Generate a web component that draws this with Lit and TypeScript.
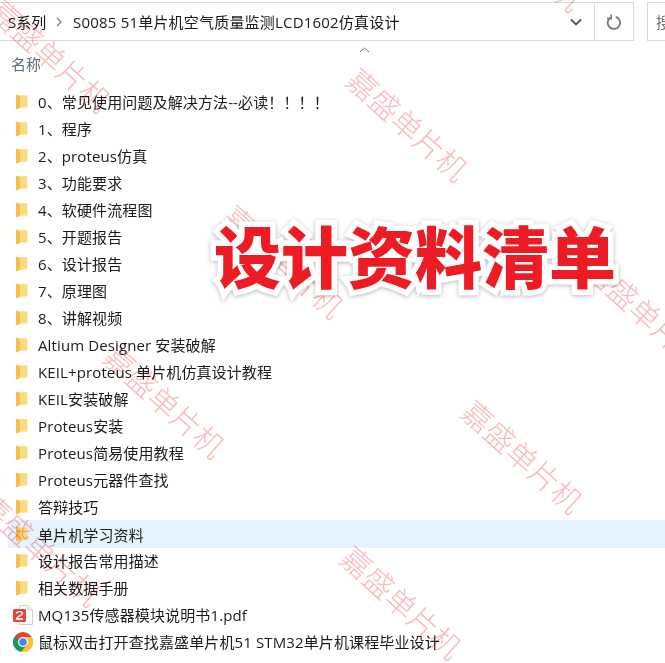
import { LitElement, html, css } from "lit";
import { customElement } from "lit/decorators.js";

const rows = [
  "0、常见使用问题及解决方法--必读！！！！",
  "1、程序",
  "2、proteus仿真",
  "3、功能要求",
  "4、软硬件流程图",
  "5、开题报告",
  "6、设计报告",
  "7、原理图",
  "8、讲解视频",
  "Altium Designer 安装破解",
  "KEIL+proteus 单片机仿真设计教程",
  "KEIL安装破解",
  "Proteus安装",
  "Proteus简易使用教程",
  "Proteus元器件查找",
  "答辩技巧",
  "单片机学习资料",
  "设计报告常用描述",
  "相关数据手册",
];

const marks: [number, number][] = [
  [50, 56], [522, -45], [407, 125], [283, 262], [645, 314],
  [522, 457], [164, 402], [401, 603], [40, 550],
];

@customElement("app-root")
export class AppRoot extends LitElement {
  static styles = css`
    :host { display: block; width: 665px; height: 663px; position: relative; overflow: hidden; background: #fff;
      font-family: "Open Sans", "Noto Sans CJK SC", sans-serif; color: #1a1a1a; }
    .bar { display: flex; padding-top: 2px; height: 39px; box-sizing: content-box; }
    .addr { width: 594px; height: 37px; flex: none; display: flex; align-items: center; border: solid #d9d9d9; border-width: 1px 0; font-size: 15px; box-sizing: content-box; }
    .crumb1 { margin-left: 8px; width: 47px; }
    .sep { width: 18px; flex: none; display: flex; }
    .path { flex: 1; white-space: nowrap; letter-spacing: .2px; }
    .drop { width: 36px; display: flex; justify-content: center; }
    .refresh { width: 38px; flex: none; height: 37px; border: 1px solid #d9d9d9; display: flex; align-items: center; justify-content: center; box-sizing: content-box; }
    .search { margin-left: 13px; flex: 1; height: 37px; border: 1px solid #d9d9d9; border-right: 0; display: flex; align-items: center; padding-left: 8px; font-size: 15px; color: #6d6d6d; overflow: hidden; white-space: nowrap; box-sizing: content-box; }
    .head { height: 40px; position: relative; font-size: 15px; color: #5b6b7c; padding: 13px 0 0 11px; box-sizing: border-box; line-height: 20px; }
    .caret { position: absolute; left: 359px; top: 6px; }
    .list { padding: 7px 0 0 8px; }
    .row { height: 27px; display: flex; align-items: center; font-size: 15px; white-space: nowrap; letter-spacing: .12px; }
    .row.sel { background: #e5f3ff; height: 28px; margin-bottom: -1px; }
    .ico { width: 30px; flex: none; display: flex; }
    .ico svg { margin-left: 8px; }
    .ico svg.file { margin-left: 5px; }
    .wm { position: absolute; width: 200px; height: 40px; margin: -20px 0 0 -100px; line-height: 40px; text-align: center; font-size: 30px; font-weight: 300; color: #f8bcbc; mix-blend-mode: multiply; transform: rotate(42deg); white-space: nowrap; pointer-events: none; }
    .title { position: absolute; left: 0; top: 209px; width: 830px; text-align: center; font-family: "Noto Sans CJK SC", sans-serif; font-size: 67px; line-height: 90px; font-weight: 900; color: #ed1c24; -webkit-text-stroke: 11px #fff; paint-order: stroke fill; white-space: nowrap; filter: drop-shadow(0 1px 2px rgba(0,0,0,.28)); }
  `;

  folder() {
    return html`<span class="ico"><svg width="12" height="16" viewBox="0 0 12 16">
      <path d="M0 1 H11 V13.5 H0 Z" fill="#fde39a"/>
      <path d="M3.5 2 H11.5 V13.5 H3.5 Z" fill="#fcdb80"/>
      <path d="M0 0.5 L4 2 V14 L0 15.5 Z" fill="#f2c04c"/>
    </svg></span>`;
  }

  render() {
    return html`
      <div class="bar">
        <div class="addr">
          <span class="crumb1">S系列</span>
          <span class="sep"><svg width="8" height="10" viewBox="0 0 8 10"><path d="M2 1 L6 5 L2 9" fill="none" stroke="#808080" stroke-width="1.3"/></svg></span>
          <span class="path">S0085 51单片机空气质量监测LCD1602仿真设计</span>
          <span class="drop"><svg width="12" height="8" viewBox="0 0 12 8"><path d="M1 1.5 L6 6.5 L11 1.5" fill="none" stroke="#555" stroke-width="1.8"/></svg></span>
        </div>
        <div class="refresh"><svg width="16" height="16" viewBox="0 0 16 16"><path d="M4.4 3.6 A6.2 6.2 0 1 0 9.8 2.8" fill="none" stroke="#777" stroke-width="1.8"/><path d="M5.2 0.4 V4.6 H1" fill="none" stroke="#777" stroke-width="1.6"/></svg></div>
        <div class="search">搜索</div>
      </div>
      <div class="head">名称<svg class="caret" width="11" height="6" viewBox="0 0 11 6"><path d="M1 5 L5.5 1 L10 5" fill="none" stroke="#6f6f6f"/></svg></div>
      <div class="list">
        ${rows.map((r, i) => html`<div class="row ${i === 16 ? "sel" : ""}">${this.folder()}<span>${r}</span></div>`)}
        <div class="row"><span class="ico"><svg class="file" width="20" height="20" viewBox="0 0 20 20">
          <path d="M6.5 .5 H15 L19.5 5 V19.5 H6.5 Z" fill="#fff" stroke="#cfcfcf"/>
          <path d="M15 .5 V5 H19.5" fill="#f2f2f2" stroke="#cfcfcf"/>
          <rect x="0" y="4" width="13" height="13" rx="1.5" fill="#e8423c"/>
          <path d="M3.5 8.5 C4 6 9.5 6 9.5 8.5 C9.5 11 4 10.5 3.5 14 H10" fill="none" stroke="#fff" stroke-width="1.4"/>
        </svg></span><span>MQ135传感器模块说明书1.pdf</span></div>
        <div class="row"><span class="ico"><svg class="file" width="20" height="20" viewBox="0 0 20 20">
          <circle cx="10" cy="10" r="10" fill="#db4437"/>
          <path d="M10 10 L1.34 5 A10 10 0 0 0 8 19.8 L12 13 Z" fill="#0f9d58"/>
          <path d="M10 5 H18.66 A10 10 0 0 1 8 19.8 L14.3 12.5 Z" fill="#fbc02d"/>
          <circle cx="10" cy="10" r="5" fill="#fff"/><circle cx="10" cy="10" r="3.8" fill="#4285f4"/>
        </svg></span><span>鼠标双击打开查找嘉盛单片机51 STM32单片机课程毕业设计</span></div>
      </div>
      ${marks.map(([x, y]) => html`<div class="wm" style="left:${x}px;top:${y}px">嘉盛单片机</div>`)}
      <div class="title">设计资料清单</div>
    `;
  }
}
